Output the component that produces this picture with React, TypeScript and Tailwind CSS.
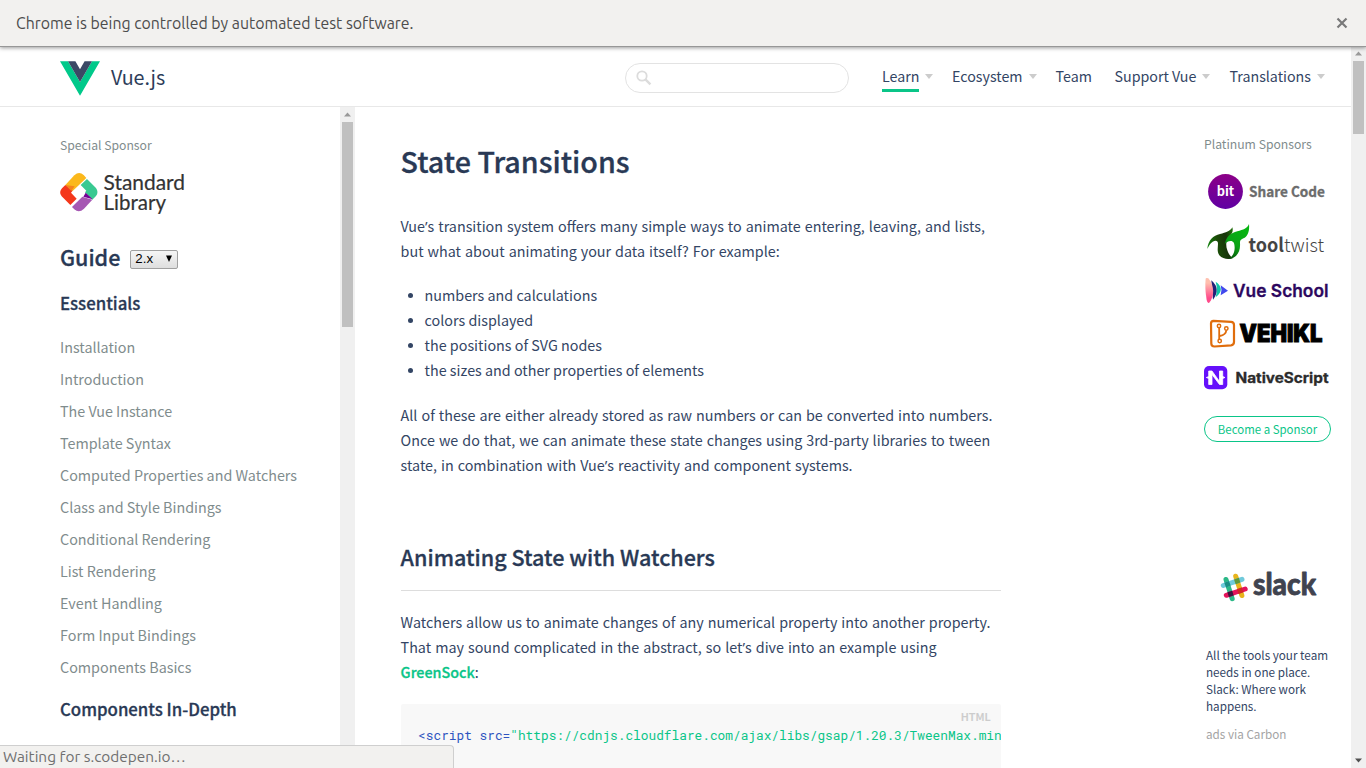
import React from "react";

const SANS = "font-['Noto_Sans_CJK_SC','Noto_Sans',sans-serif]";
const SEMI = "font-medium [-webkit-text-stroke:0.3px_currentColor]";

const guideLinks = [
  "Installation",
  "Introduction",
  "The Vue Instance",
  "Template Syntax",
  "Computed Properties and Watchers",
  "Class and Style Bindings",
  "Conditional Rendering",
  "List Rendering",
  "Event Handling",
  "Form Input Bindings",
  "Components Basics",
];

const navItems = [
  { label: "Learn", width: "w-[70px]", menu: true, active: true },
  { label: "Ecosystem", width: "w-[103.5px]", menu: true, active: false },
  { label: "Team", width: "w-[59px]", menu: false, active: false },
  { label: "Support Vue", width: "w-[115px]", menu: true, active: false },
  { label: "Translations", width: "w-[96px]", menu: true, active: false },
];

function Apostrophe() {
  return <span className="font-['Open_Sans',sans-serif] text-[15px] leading-none">’</span>;
}

function InfoBar() {
  return (
    <div className="relative z-20 flex h-[47px] shrink-0 items-center justify-between border-b border-[#979797] bg-[#f2f1ef] pr-[18px] pl-4 shadow-[0_1px_4px_rgba(0,0,0,0.4)]">
      <span className="font-['Ubuntu','Noto_Sans',sans-serif] text-[15.87px] leading-5 text-[#4c4c4c]">
        Chrome is being controlled by automated test software.
      </span>
      <svg className="size-[12px]" viewBox="0 0 12 12">
        <path d="M1.5 1.5L10.5 10.5M10.5 1.5L1.5 10.5" stroke="#797979" strokeWidth="2.2" />
      </svg>
    </div>
  );
}

function Header() {
  return (
    <header className="flex h-[60px] shrink-0 items-center border-b border-[#e8e8e8] pl-[60px]">
      <svg className="mt-[3px] h-[35px] w-10" viewBox="0 0 40 35">
        <path d="M0 0.2H8L20 21L32 0.2H40L20 34.800Z" fill="#00c98a" />
        <path d="M8 0.2H15.4L20 8.3L24.6 0.2H32L20 21Z" fill="#3b4865" />
      </svg>
      <span className="ml-[11px] w-[514px] text-[19.7px] leading-[28px] text-[#2d3d5a]">Vue.js</span>
      <div className="mt-[2px] flex h-[30px] w-[224px] items-center rounded-full border border-[#e3e3e3] pl-[10px]">
        <svg className="size-4" viewBox="0 0 16 16" fill="none" stroke="#dcdcdc">
          <circle cx="6" cy="6" r="4.7" strokeWidth="1.8" />
          <path d="M9.4 9.4L14.4 14.4" strokeWidth="2.4" />
        </svg>
      </div>
      <nav className="mt-[2px] ml-[33px] flex">
        {navItems.map((n) => (
          <div key={n.label} className={`flex items-start ${n.width}`}>
            <span
              className={`h-[29px] border-b-[3px] text-[14.25px] leading-[25px] whitespace-nowrap text-[#334564] ${
                n.active ? "border-[#0ac588]" : "border-transparent"
              }`}
            >
              {n.label}
            </span>
            {n.menu && (
              <svg className="mt-[11px] ml-[6px] h-[5px] w-2" viewBox="0 0 8 5">
                <path d="M0 0H8L4 5Z" fill="#ccc" />
              </svg>
            )}
          </div>
        ))}
      </nav>
    </header>
  );
}

function StandardLibraryLogo() {
  return (
    <svg className="h-[46px] w-[130px] overflow-visible" viewBox="0 0 130 46">
      <g transform="translate(-20 -42) scale(0.33333)">
        <path d="M76 165L103 136Q117 122 131 135L139 144L98 183Z" fill="#fbb81b" />
        <path d="M76 165L66 175Q55 187 65 199L91 225L110 206L93 188L98 182Z" fill="#f4371b" />
        <path d="M76 165L104 169L94 183Z" fill="#f5831d" />
        <path d="M96 231L127 200L157 209L132 236Q117 250 103 238Z" fill="#a657b3" />
        <path d="M122 165L141 147L168 174Q177 187 168 198L157 209L135 187L139 182Z" fill="#39c991" />
        <path d="M137 188L158 208L130 200Z" fill="#740095" />
      </g>
      <g className="font-['Lato',sans-serif]" fontSize="21" fill="#333" stroke="#333" strokeWidth="0.200">
        <text x="43.5" y="17.700" textLength="81.5" lengthAdjust="spacingAndGlyphs">Standard</text>
        <text x="43.5" y="37.5" textLength="62.5" lengthAdjust="spacingAndGlyphs">Library</text>
      </g>
    </svg>
  );
}

function ScrollTrack({ thumb, down }: { thumb: string; down: boolean }) {
  return (
    <div className="flex w-[15px] shrink-0 flex-col items-center bg-[#f0f0f0]">
      <svg className="h-[15px] w-[15px] shrink-0" viewBox="0 0 15 15">
        <path d="M4 9.5L7.5 5.5L11 9.5Z" fill="#999" />
      </svg>
      <div className={`w-[11px] shrink-0 bg-[#c0c0c0] ${thumb}`} />
      {down && (
        <svg className="mt-auto h-[15px] w-[15px]" viewBox="0 0 15 15">
          <path d="M4 5.5L7.5 9.5L11 5.5Z" fill="#505050" />
        </svg>
      )}
    </div>
  );
}

function Sidebar() {
  return (
    <aside className="flex w-[355px] shrink-0">
      <div className="flex w-[340px] flex-col pl-[60px]">
        <div className="mt-[28px] text-[12.2px] leading-5 text-[#7f8c8d]">Special Sponsor</div>
        <div className="mt-[17px]"><StandardLibraryLogo /></div>
        <div className="mt-[25px] flex h-7 items-center">
          <h2 className={`text-[21.5px] leading-7 text-[#293955] ${SEMI}`}>Guide</h2>
          <div className="mt-[4px] ml-[10px] flex h-[19px] w-12 items-center justify-between rounded-[2px] border border-[#a0a0a0] bg-linear-to-b from-[#f6f6f6] to-[#dedede] pr-[5px] pl-[4px]">
            <span className="font-['Liberation_Sans',sans-serif] text-[13.3px] leading-none text-black">2.x</span>
            <svg className="mb-[2px] h-[7px] w-[6px]" viewBox="0 0 6 7">
              <path d="M0 0.5H6L3 7Z" fill="#000" />
            </svg>
          </div>
        </div>
        <h3 className={`mt-5 text-[16.8px] leading-6 text-[#293955] ${SEMI}`}>Essentials</h3>
        <ul className="mt-4 text-[14.33px] leading-8 text-[#7f8c8d]">
          {guideLinks.map((l) => (
            <li key={l} className="whitespace-nowrap">{l}</li>
          ))}
        </ul>
        <h3 className={`mt-[14px] text-[16.8px] leading-6 text-[#293955] ${SEMI}`}>Components In-Depth</h3>
      </div>
      <ScrollTrack thumb="h-[205px]" down={false} />
    </aside>
  );
}

function Article() {
  return (
    <article className="ml-[45.6px] w-[600px] shrink-0 text-[14.33px] leading-[25px] text-[#334564]">
      <h1 className={`mt-[33px] text-[28.66px] leading-[42px] text-[#293955] ${SEMI}`}>State Transitions</h1>
      <p className="mt-[31px] [word-spacing:0.8px] whitespace-nowrap">
        Vue<Apostrophe />s transition system offers many simple ways to animate entering, leaving, and lists,
        <br />
        but what about animating your data itself? For example:
      </p>
      <ul className="mt-[19px]">
        {["numbers and calculations", "colors displayed", "the positions of SVG nodes", "the sizes and other properties of elements"].map((t) => (
          <li key={t} className="flex items-center">
            <span className="mt-px mr-[12px] ml-[7px] size-[5px] rounded-full bg-[#334564]" />
            {t}
          </li>
        ))}
      </ul>
      <p className="mt-5 [word-spacing:0.8px] whitespace-nowrap">
        All of these are either already stored as raw numbers or can be converted into numbers.
        <br />
        Once we do that, we can animate these state changes using 3rd-party libraries to tween
        <br />
        state, in combination with Vue<Apostrophe />s reactivity and component systems.
      </p>
      <h2 className={`mt-[62px] h-[52px] border-b border-[#ddd] text-[21.55px] leading-9 text-[#293955] ${SEMI}`}>
        Animating State with Watchers
      </h2>
      <p className="mt-[18px] [word-spacing:0.8px] whitespace-nowrap">
        Watchers allow us to animate changes of any numerical property into another property.
        <br />
        That may sound complicated in the abstract, so let<Apostrophe />s dive into an example using
        <br />
        <span className={`text-[#0ac588] ${SEMI}`}>GreenSock</span>:
      </p>
      <div className="mt-5 h-[80px] overflow-hidden rounded-[2px] bg-[#f8f8f8]">
        <div className="pt-[3px] pr-[10px] text-right text-[10.9px] leading-[18px] font-medium text-[#ccc] [-webkit-text-stroke:0.2px_#ccc]">HTML</div>
        <pre className="pl-[17.5px] font-['Roboto_Mono','Liberation_Mono',monospace] text-[12.8px] leading-[20px] text-[#2f55c0]">
          {"<script src="}
          <span className="text-[#0ac588]">{'"https://cdnjs.cloudflare.com/ajax/libs/gsap/1.20.3/TweenMax.min.js"'}</span>
        </pre>
      </div>
    </article>
  );
}

function SponsorLogos() {
  return (
    <svg className="h-[230px] w-[140px] overflow-visible" viewBox="1200 165 140 230">
      <defs>
        <linearGradient id="bit" x1="0" y1="0" x2="0" y2="1">
          <stop offset="0" stopColor="#8c0087" />
          <stop offset="1" stopColor="#6000a3" />
        </linearGradient>
        <linearGradient id="leafDark" x1="0" y1="0.6" x2="1" y2="0.4">
          <stop offset="0" stopColor="#12860c" />
          <stop offset="0.4" stopColor="#1b4a08" />
          <stop offset="0.75" stopColor="#17330a" />
          <stop offset="1" stopColor="#1d6b08" />
        </linearGradient>
        <linearGradient id="leafLight" x1="0" y1="1" x2="0.5" y2="0">
          <stop offset="0" stopColor="#053f05" />
          <stop offset="0.5" stopColor="#0ba316" />
          <stop offset="1" stopColor="#06b412" />
        </linearGradient>
        <linearGradient id="pink" x1="0" y1="0" x2="0" y2="1">
          <stop offset="0.2" stopColor="#ffbfae" />
          <stop offset="0.8" stopColor="#ff4b8b" />
        </linearGradient>
      </defs>

      <circle cx="1225.5" cy="191.5" r="17.4" fill="url(#bit)" />
      <g className="font-['Noto_Sans_CJK_SC',sans-serif]" fontWeight="700">
        <text x="1216.7" y="196.3" fontSize="13" fill="#fff" textLength="17.5" lengthAdjust="spacingAndGlyphs">bit</text>
        <text x="1249" y="196.5" fontSize="13.8" fill="#6c6c6c" stroke="#6c6c6c" strokeWidth="0.300" textLength="76" lengthAdjust="spacingAndGlyphs">Share Code</text>
      </g>

      <g transform="translate(1200 165) scale(0.33333)">
        <path d="M22 252C24 226 40 211 60 207C78 203 90 199 97 187C100 197 97 206 90 212C78 222 76 240 82 256C86 268 92 276 100 279C88 284 68 283 58 271C50 260 54 246 54 236C54 226 46 226 38 230C30 235 26 243 22 252Z" fill="url(#leafDark)" />
        <path d="M74 238C78 216 92 204 112 199C130 194 142 190 147 177C149 196 144 212 134 218C124 222 120 224 120 234C122 258 112 280 84 282C98 276 104 262 104 248C104 234 100 228 92 228C84 228 78 232 74 238Z" fill="url(#leafLight)" />
      </g>
      <g className="font-['Noto_Sans_CJK_SC',sans-serif]" fill="#444">
        <text x="1248.500" y="251.500" fontSize="19" fontWeight="700" textLength="35.500" lengthAdjust="spacingAndGlyphs">tool</text>
        <text x="1284" y="251.500" fontSize="19" fontWeight="300" textLength="40" lengthAdjust="spacingAndGlyphs">twist</text>
      </g>

      <g transform="translate(1200 165) scale(0.33333)">
        <path d="M34 346Q64 372 39 404Z" fill="#232078" />
        <path d="M47 350Q78 372 47 397Q54 373 47 350Z" fill="#12c5a8" />
        <path d="M62 361L84 377L62 391Q67 376 62 361Z" fill="#4149ed" />
        <path d="M17 341Q18 337 25 340C44 362 44 396 27 414Q22 416 20 405Q14 370 17 341Z" fill="url(#pink)" />
      </g>
      <text className="font-['Inter',sans-serif]" x="1233" y="296.900" fontSize="17.3" fontWeight="600" fill="#2c075e" stroke="#2c075e" strokeWidth="0.300" textLength="95.500" lengthAdjust="spacingAndGlyphs">Vue School</text>

      <path d="M1213.500 320.800L1231 321.800Q1234 322 1234 325V342Q1234 345 1231 345.300L1214.500 346.500Q1211.300 346.500 1211.300 343.500L1211 323.500Q1211 320.800 1213.500 320.800Z" fill="none" stroke="#e06d0c" strokeWidth="2.200" />
      <g fill="none" stroke="#e06d0c" strokeWidth="1.500">
        <circle cx="1219" cy="326" r="1.700" />
        <circle cx="1226.300" cy="328.500" r="1.700" />
        <circle cx="1219.700" cy="341" r="1.700" />
        <path d="M1219.200 328V339M1226.300 330.300Q1226 335 1219.700 336" strokeWidth="1.800" />
      </g>
      <text className="font-['Inter',sans-serif]" x="1239.500" y="342.200" fontSize="24" fontWeight="900" fill="#000" stroke="#000" strokeWidth="1" textLength="83" lengthAdjust="spacingAndGlyphs">VEHIKL</text>

      <rect x="1204" y="366" width="23.300" height="23.300" rx="5" fill="#6510fb" />
      <path d="M1206.300 377.500Q1208.700 377.500 1208.700 375.500V371H1212L1219.500 381.500V371H1222.700V375.500Q1222.700 377.500 1225 377.500Q1222.700 377.500 1222.700 379.500V384.500H1219.500L1212 374.500V384.500H1208.700V379.500Q1208.700 377.500 1206.300 377.500Z" fill="#fff" stroke="#fff" strokeWidth="0.800" />
      <text className="font-['Inter',sans-serif]" x="1235.500" y="383" fontSize="14.300" fontWeight="700" fill="#2b2b2b" stroke="#2b2b2b" strokeWidth="0.300" textLength="93" lengthAdjust="spacingAndGlyphs">NativeScript</text>
    </svg>
  );
}

function SlackLogo() {
  return (
    <svg className="h-[36px] w-[110px] overflow-visible" viewBox="1214 568 110 36">
      <g strokeWidth="5" strokeLinecap="round" fill="none">
        <path d="M1235.700 576.200L1241.900 595.500" stroke="#e8b41c" />
        <path d="M1226 579.500L1232.200 598.700" stroke="#2bb887" />
        <path d="M1223.300 585.500L1242 579.300" stroke="#70cadb" />
        <path d="M1226.300 595.300L1245.200 589" stroke="#e3145a" />
      </g>
      <g strokeWidth="5" fill="none">
        <path d="M1226.600 581.800L1228.400 586.500" stroke="#1b8f84" />
        <path d="M1236.400 578.600L1238 583.400" stroke="#5f9a3c" />
        <path d="M1229.800 591.500L1231.300 596.300" stroke="#3f1240" />
        <path d="M1239.300 588.400L1240.900 593.100" stroke="#cf2a26" />
      </g>
      <text className="font-['Lato',sans-serif]" x="1253" y="595" fontSize="30.500" fontWeight="900" fill="#40434f" stroke="#40434f" strokeWidth="0.800" strokeLinejoin="round" textLength="63" lengthAdjust="spacingAndGlyphs">slack</text>
    </svg>
  );
}

function SponsorColumn() {
  return (
    <aside className="ml-[203.4px] w-[147px] shrink-0">
      <div className="mt-[27px] text-[12.2px] leading-5 text-[#7f8c8d]">Platinum Sponsors</div>
      <div className="mt-[11px] -ml-1"><SponsorLogos /></div>
      <div className="mt-[21px] flex h-[26px] w-[127px] items-center justify-center rounded-full border border-[#0ac588] pt-[2px] text-[11.45px] leading-none text-[#0ac588]">
        Become a Sponsor
      </div>
      <div className="mt-[126px] ml-[10px]"><SlackLogo /></div>
      <p className="mt-[42px] ml-[2px] text-[11.7px] leading-[17px] whitespace-nowrap text-[#334564]">
        All the tools your team
        <br />
        needs in one place.
        <br />
        Slack: Where work
        <br />
        happens.
      </p>
      <div className="mt-[11px] ml-[2px] text-[11.7px] leading-[17px] text-[#a4a4a4]">ads via Carbon</div>
    </aside>
  );
}

export default function App() {
  return (
    <div className={`relative flex h-[768px] w-[1366px] flex-col overflow-hidden bg-white ${SANS}`}>
      <InfoBar />
      <div className="flex min-h-0 flex-1">
        <div className="flex w-[1351px] flex-col">
          <Header />
          <main className="flex min-h-0 flex-1 overflow-hidden">
            <Sidebar />
            <Article />
            <SponsorColumn />
          </main>
        </div>
        <div className="-mt-px flex">
          <ScrollTrack thumb="h-[73px]" down />
        </div>
      </div>
      <div className="absolute bottom-0 left-0 z-10 flex h-[23px] w-[454px] items-center rounded-tr-[4px] border-t border-r border-[#cfcfcf] bg-[#f2f1ef] pl-[3px] font-['Ubuntu','Noto_Sans',sans-serif] text-[15.4px] leading-none text-[#6f6f6f]">
        Waiting for s.codepen.io…
      </div>
    </div>
  );
}
